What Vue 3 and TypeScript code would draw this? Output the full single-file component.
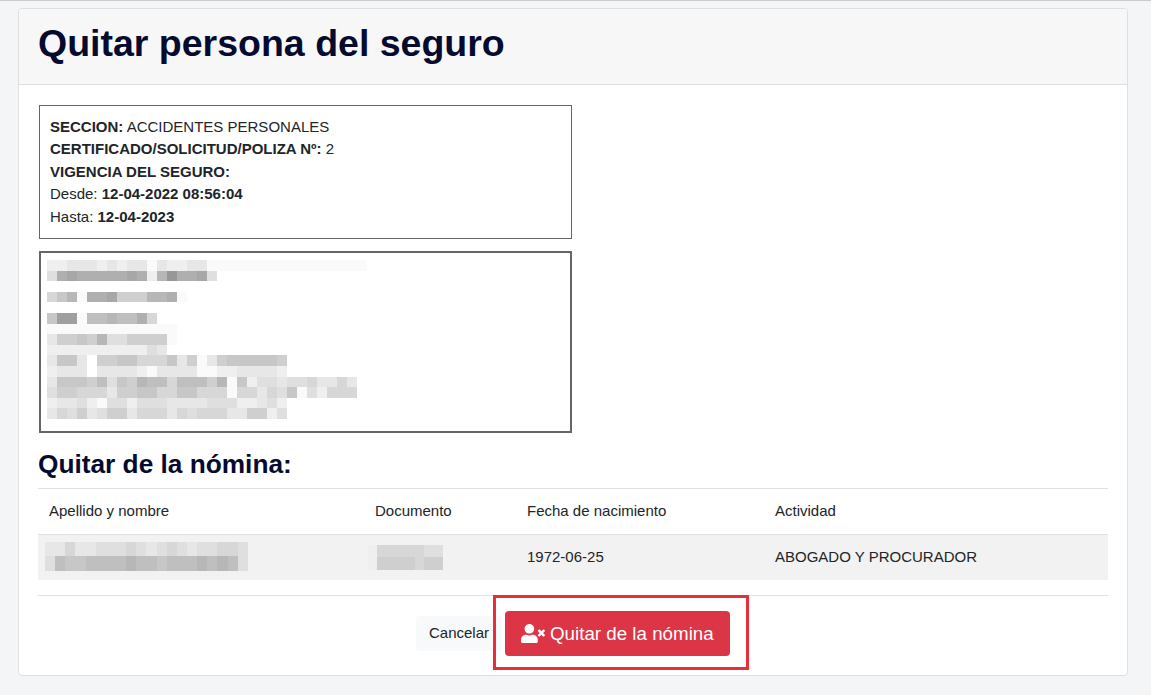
<script setup lang="ts">
const toGray = (d: string) => {
  const v = d === '1' ? 250 : 255 - parseInt(d, 16) * 8
  return `rgb(${v},${v},${v})`
}
const parse = (rows: string[]) => rows.map((r) => r.split('').map(toGray))

const infoMosaic = parse([
  '22333232331322331111111111111111',
  '4abaaaaaba29daab4',
  '00000000000000000',
  '5791aab66699a1',
  '000000000000000',
  '7cc188988a5',
  '1111111111111',
  '3667694466661',
  '222222222243',
  '377306677555736136777776',
  '233303333213333112233332',
  '3777684769885888691724434453353',
  '4665553667755775551553547142555',
  '233421442444333344422342',
  '354634663555354555336624',
])
const nameMosaic = parse([
  '33533444543454344554',
  '48778888988788898984',
])
const docMosaic = parse([
  '25555544',
  '26666566',
])
</script>

<template>
  <div class="page">
    <section class="card">
      <header class="card-head">
        <h1>Quitar persona del seguro</h1>
      </header>
      <div class="card-body">
        <div class="info">
          <div><b>SECCION:</b> ACCIDENTES PERSONALES</div>
          <div><b>CERTIFICADO/SOLICITUD/POLIZA Nº:</b> 2</div>
          <div><b>VIGENCIA DEL SEGURO:</b></div>
          <div>Desde: <b>12-04-2022 08:56:04</b></div>
          <div>Hasta: <b>12-04-2023</b></div>
        </div>
        <div class="blur-box">
          <div class="soft">
            <div v-for="(row, i) in infoMosaic" :key="i" class="mrow">
              <i v-for="(c, j) in row" :key="j" :style="{ background: c }"></i>
            </div>
          </div>
        </div>
        <h2>Quitar de la nómina:</h2>
        <table>
          <colgroup>
            <col class="c1" /><col class="c2" /><col class="c3" /><col />
          </colgroup>
          <thead>
            <tr>
              <th>Apellido y nombre</th>
              <th>Documento</th>
              <th>Fecha de nacimiento</th>
              <th>Actividad</th>
            </tr>
          </thead>
          <tbody>
            <tr>
              <td class="name-cell">
                <div class="soft">
                  <div v-for="(row, i) in nameMosaic" :key="i" class="nrow">
                    <i v-for="(c, j) in row" :key="j" :style="{ background: c }"></i>
                  </div>
                </div>
              </td>
              <td class="doc-cell">
                <div class="soft">
                  <div v-for="(row, i) in docMosaic" :key="i" class="drow">
                    <i v-for="(c, j) in row" :key="j" :style="{ background: c }"></i>
                  </div>
                </div>
              </td>
              <td>1972-06-25</td>
              <td>ABOGADO Y PROCURADOR</td>
            </tr>
          </tbody>
        </table>
        <footer class="actions">
          <button class="btn-cancel" type="button">Cancelar</button>
          <span class="danger-wrap">
            <button class="btn-danger" type="button">
              <svg viewBox="0 0 640 512" width="24" height="19.2" aria-hidden="true">
                <path fill="currentColor" d="M589.6 240l45.6-45.6c6.3-6.3 6.3-16.5 0-22.8l-22.8-22.8c-6.3-6.3-16.5-6.3-22.8 0L544 194.4l-45.6-45.6c-6.3-6.3-16.5-6.3-22.8 0l-22.8 22.8c-6.3 6.3-6.3 16.5 0 22.8l45.6 45.6-45.6 45.6c-6.3 6.3-6.3 16.5 0 22.8l22.8 22.8c6.3 6.3 16.5 6.3 22.8 0l45.6-45.6 45.6 45.6c6.3 6.3 16.5 6.3 22.8 0l22.8-22.8c6.3-6.3 6.3-16.5 0-22.8L589.6 240zM224 256c70.7 0 128-57.3 128-128S294.7 0 224 0 96 57.3 96 128s57.3 128 128 128zm89.6 32h-16.7c-22.2 10.2-46.9 16-72.9 16s-50.6-5.8-72.9-16h-16.7C60.2 288 0 348.2 0 422.4V464c0 26.5 21.5 48 48 48h352c26.5 0 48-21.5 48-48v-41.6c0-74.2-60.2-134.4-134.4-134.4z" />
              </svg>
              <span>Quitar de la nómina</span>
            </button>
            <span class="frame"></span>
          </span>
        </footer>
      </div>
    </section>
  </div>
</template>

<style>
html, body { margin: 0; background: #f4f5f7; }
</style>

<style scoped>
.page {
  box-sizing: border-box;
  height: 695px;
  overflow: hidden;
  padding: 7px 23px 0 18px;
  border-top: 1px solid #c9cbcd;
  font-family: "Liberation Sans", Arial, sans-serif;
  font-size: 15px;
  line-height: 22.5px;
  color: #212529;
}
.card {
  box-sizing: border-box;
  height: 668px;
  background: #fff;
  border: 1px solid #dfdfdf;
  border-radius: 4px;
  overflow: hidden;
}
.card-head {
  box-sizing: border-box;
  height: 76px;
  padding: 12px 19px;
  background: #f7f7f7;
  border-bottom: 1px solid #dfdfdf;
}
h1 {
  margin: 0;
  font-size: 37.5px;
  line-height: 45px;
  font-weight: 700;
  color: #050a30;
}
.card-body {
  padding: 20px 19px 0 19px;
}
.info {
  box-sizing: border-box;
  width: 533px;
  height: 134px;
  margin-left: 1px;
  padding: 9.5px 10px;
  border: 1px solid #666;
}
.blur-box {
  box-sizing: border-box;
  width: 533px;
  height: 182px;
  margin: 12px 0 0 1px;
  padding: 7px 6px;
  border: 2px solid #666;
  overflow: hidden;
}
.soft { filter: blur(0.5px); }
.mrow {
  display: flex;
  height: 10.6px;
}
.mrow i {
  flex: 0 0 10px;
  height: 100%;
}
h2 {
  margin: 16px 0 7.5px;
  font-size: 26.25px;
  line-height: 31.5px;
  font-weight: 700;
  color: #050a30;
}
table {
  width: 1070px;
  table-layout: fixed;
  border-collapse: collapse;
  border-top: 1px solid #dee2e6;
}
.c1 { width: 326px; }
.c2 { width: 152px; }
.c3 { width: 248px; }
th, td {
  box-sizing: border-box;
  padding: 11px;
  text-align: left;
  font-weight: 400;
  vertical-align: middle;
}
th { height: 45px; }
td { height: 46px; }
tbody tr { background: #f2f2f2; }
thead th { border-bottom: 1px solid #dee2e6; }
.name-cell { padding: 7px 0 0 7px; vertical-align: top; }
.doc-cell { padding: 10px 0 0 4px; vertical-align: top; }
.nrow, .drow { display: flex; }
.nrow { height: 14.5px; }
.drow { height: 12.5px; }
.nrow i { flex: 0 0 10.15px; }
.drow i { flex: 0 0 9.4px; }
.actions {
  display: flex;
  justify-content: center;
  align-items: center;
  gap: 3px;
  margin-top: 15px;
  padding-top: 15px;
  border-top: 1px solid #dee2e6;
}
.btn-cancel {
  height: 35px;
  padding: 0 13px;
  border: 0;
  border-radius: 4px;
  background: #f8f9fa;
  color: #212529;
  font: inherit;
}
.danger-wrap {
  position: relative;
  display: inline-flex;
}
.btn-danger {
  display: inline-flex;
  align-items: center;
  gap: 5px;
  box-sizing: border-box;
  width: 225px;
  height: 45px;
  padding: 0 16px;
  border: 0;
  border-radius: 4px;
  background: #dc3545;
  color: #fff;
  font-family: inherit;
  font-size: 18.75px;
}
.frame {
  position: absolute;
  left: -12px;
  top: -16px;
  width: 256px;
  height: 75px;
  box-sizing: border-box;
  border: 3px solid #e5303a;
  pointer-events: none;
}
</style>
